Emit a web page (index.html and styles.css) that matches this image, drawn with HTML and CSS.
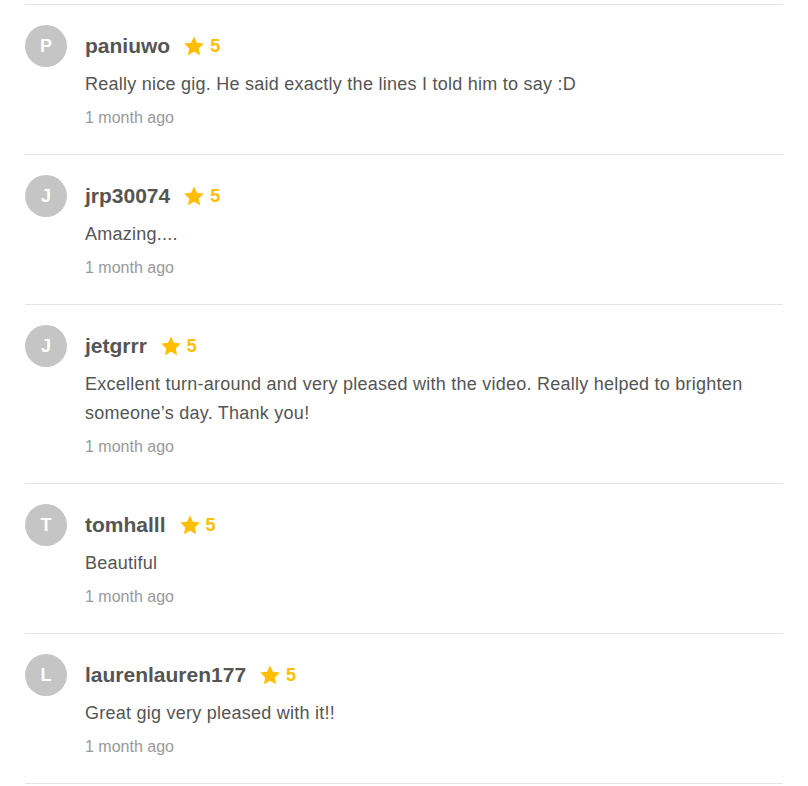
FILE: index.html
```html
<!DOCTYPE html>
<html>
<head>
<meta charset="utf-8">
<link rel="stylesheet" href="styles.css">
</head>
<body>
<div class="reviews">
  <div class="review">
    <div class="avatar">P</div>
    <div class="content">
      <div class="header"><span class="name">paniuwo</span><span class="rating"><svg class="star" viewBox="0 0 24 24"><path d="M12 1.6l3.2 6.9 7.5.9-5.5 5.2 1.4 7.4L12 18.3 5.4 22l1.4-7.4L1.3 9.4l7.5-.9z"/></svg><b>5</b></span></div>
      <p class="text">Really nice gig. He said exactly the lines I told him to say :D</p>
      <div class="time">1 month ago</div>
    </div>
  </div>
  <div class="review">
    <div class="avatar">J</div>
    <div class="content">
      <div class="header"><span class="name">jrp30074</span><span class="rating"><svg class="star" viewBox="0 0 24 24"><path d="M12 1.6l3.2 6.9 7.5.9-5.5 5.2 1.4 7.4L12 18.3 5.4 22l1.4-7.4L1.3 9.4l7.5-.9z"/></svg><b>5</b></span></div>
      <p class="text">Amazing....</p>
      <div class="time">1 month ago</div>
    </div>
  </div>
  <div class="review">
    <div class="avatar">J</div>
    <div class="content">
      <div class="header"><span class="name">jetgrrr</span><span class="rating"><svg class="star" viewBox="0 0 24 24"><path d="M12 1.6l3.2 6.9 7.5.9-5.5 5.2 1.4 7.4L12 18.3 5.4 22l1.4-7.4L1.3 9.4l7.5-.9z"/></svg><b>5</b></span></div>
      <p class="text">Excellent turn-around and very pleased with the video. Really helped to brighten someone’s day. Thank you!</p>
      <div class="time">1 month ago</div>
    </div>
  </div>
  <div class="review">
    <div class="avatar">T</div>
    <div class="content">
      <div class="header"><span class="name">tomhalll</span><span class="rating"><svg class="star" viewBox="0 0 24 24"><path d="M12 1.6l3.2 6.9 7.5.9-5.5 5.2 1.4 7.4L12 18.3 5.4 22l1.4-7.4L1.3 9.4l7.5-.9z"/></svg><b>5</b></span></div>
      <p class="text">Beautiful</p>
      <div class="time">1 month ago</div>
    </div>
  </div>
  <div class="review">
    <div class="avatar">L</div>
    <div class="content">
      <div class="header"><span class="name">laurenlauren177</span><span class="rating"><svg class="star" viewBox="0 0 24 24"><path d="M12 1.6l3.2 6.9 7.5.9-5.5 5.2 1.4 7.4L12 18.3 5.4 22l1.4-7.4L1.3 9.4l7.5-.9z"/></svg><b>5</b></span></div>
      <p class="text">Great gig very pleased with it!!</p>
      <div class="time">1 month ago</div>
    </div>
  </div>
</div>
</body>
</html>
```
FILE: styles.css
```css
html, body {
  margin: 0;
  padding: 0;
  background: #fff;
}
body {
  font-family: "Liberation Sans", Arial, sans-serif;
  color: #555;
}
.reviews {
  margin: 0 25px;
  padding-top: 4px;
}
.review {
  display: flex;
  border-top: 1px solid #e4e5e7;
  padding: 20px 0 25px;
}
.review:last-child {
  border-bottom: 1px solid #e4e5e7;
}
.avatar {
  flex: none;
  width: 42px;
  height: 42px;
  border-radius: 50%;
  background: #c5c5c5;
  color: #fff;
  font-weight: bold;
  font-size: 18px;
  display: flex;
  align-items: center;
  justify-content: center;
  margin-right: 18px;
}
.content {
  flex: 1;
  min-width: 0;
}
.header {
  height: 42px;
  display: flex;
  align-items: center;
}
.name {
  font-weight: bold;
  font-size: 21px;
  color: #555;
}
.rating {
  display: flex;
  align-items: center;
  margin-left: 13px;
  color: #ffbe00;
  font-size: 18px;
}
.star {
  width: 22px;
  height: 22px;
  fill: #ffbe00;
  margin-right: 5px;
}
.rating b {
  font-weight: bold;
}
.text {
  margin: 3px 0 0;
  font-size: 18px;
  letter-spacing: 0.25px;
  line-height: 29px;
  color: #555;
}
.time {
  margin-top: 8px;
  font-size: 16px;
  line-height: 22px;
  color: #999;
}
```
